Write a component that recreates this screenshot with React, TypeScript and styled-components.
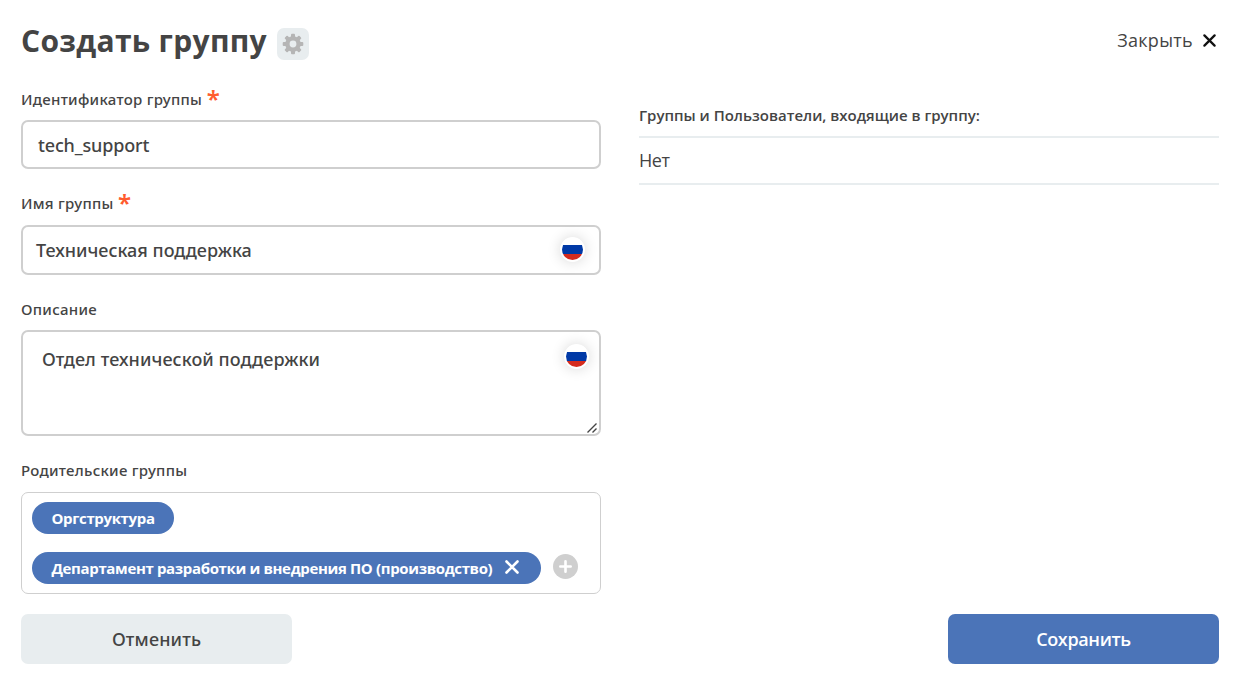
import React from "react";
import styled, { createGlobalStyle } from "styled-components";

const GlobalStyle = createGlobalStyle`
  *, *::before, *::after { box-sizing: border-box; }
  body { margin: 0; background: #fff; }
`;

const mediumFont = `"Noto Sans", "Open Sans", sans-serif`;

const Dialog = styled.main`
  width: 1236px;
  height: 682px;
  padding: 20px 17px 18px 21px;
  display: flex;
  flex-direction: column;
  background: #fff;
  color: #444;
  font-family: "Open Sans", "Noto Sans", sans-serif;
  font-size: 18px;
`;

const Header = styled.header`
  height: 44px;
  display: flex;
  align-items: center;
`;

const Title = styled.h1`
  margin: -2px 0 0;
  font-size: 30px;
  line-height: 44px;
  font-weight: 700;
  letter-spacing: 0.3px;
  white-space: nowrap;
`;

const SettingsButton = styled.button`
  width: 32px;
  height: 32px;
  margin: 4px 0 0 10px;
  padding: 0;
  display: grid;
  place-items: center;
  border: 0;
  border-radius: 7px;
  background: #e8edef;
`;

const CloseButton = styled.button`
  margin: 0 3px 4px auto;
  padding: 0;
  display: flex;
  align-items: center;
  gap: 10px;
  border: 0;
  background: none;
  color: #444;
  font: inherit;
  line-height: 42px;
  letter-spacing: 0.3px;

  svg {
    margin-top: 1px;
  }
`;

const Columns = styled.div`
  flex: 1;
  display: grid;
  grid-template-columns: 580px 580px;
  column-gap: 38px;
`;

const Form = styled.form`
  display: flex;
  flex-direction: column;
`;

const Label = styled.label<{ $top: number; $gap: number }>`
  margin-top: ${(p) => p.$top}px;
  margin-bottom: ${(p) => p.$gap}px;
  height: 22px;
  display: flex;
  font-family: ${mediumFont};
  font-size: 15px;
  line-height: 22px;
  font-weight: 500;
  letter-spacing: 0.28px;
  white-space: nowrap;
`;

const Required = styled.span`
  margin-left: 4.5px;
  color: #ff5b2e;
  font-size: 24px;
  line-height: 22px;
  font-weight: 600;
`;

const Field = styled.div<{ $height: number; $indent: number; $spacing?: number }>`
  height: ${(p) => p.$height}px;
  padding: 0 14px 0 ${(p) => p.$indent}px;
  display: flex;
  align-items: center;
  justify-content: space-between;
  border: 2px solid #cfcfcf;
  border-radius: 7px;
  font-family: ${mediumFont};
  font-weight: 500;
  line-height: 26px;
  letter-spacing: ${(p) => p.$spacing ?? 0}px;
`;

const TextArea = styled(Field)`
  position: relative;
  padding-top: 12px;
  padding-right: 10px;
  align-items: flex-start;
`;

const ResizeGrip = styled.svg`
  position: absolute;
  right: 2px;
  bottom: 1px;
`;

const AreaText = styled.span`
  padding-top: 2px;
`;

const FlagBadge = styled.span<{ $lift?: boolean }>`
  width: 25px;
  height: 25px;
  margin-bottom: ${(p) => (p.$lift ? 1 : 0)}px;
  flex: none;
  display: grid;
  place-items: center;
  border-radius: 50%;
  background: #fff;
  box-shadow: 0 0 14px rgba(0, 0, 0, 0.16);
`;

const Chips = styled.div`
  height: 102px;
  padding: 9px 10px;
  display: flex;
  flex-direction: column;
  gap: 18px;
  border: 1px solid #cfcfcf;
  border-radius: 7px;
`;

const ChipRow = styled.div`
  height: 32px;
  display: flex;
  align-items: flex-start;
  gap: 12px;
`;

const Chip = styled.span<{ $width: number }>`
  width: ${(p) => p.$width}px;
  height: 32px;
  padding: 0 22px 0 20px;
  display: flex;
  align-items: flex-start;
  justify-content: space-between;
  border-radius: 16px;
  background: #4b74b8;
  color: #fff;
  font-size: 15px;
  line-height: 32px;
  font-weight: 700;
  white-space: nowrap;

  svg {
    margin-top: 8px;
  }
`;

const ChipText = styled.span`
  margin-left: -0.5px;
  letter-spacing: -0.35px;
`;

const AddButton = styled.button`
  width: 25px;
  height: 25px;
  margin-top: 2px;
  padding: 0;
  border: 0;
  background: none;
`;

const Members = styled.section`
  padding-top: 40px;
`;

const MembersTitle = styled.h2`
  margin: 0;
  height: 34px;
  font-size: 15px;
  line-height: 22px;
  font-weight: 600;
  border-bottom: 2px solid #e8edef;
`;

const MembersRow = styled.div`
  height: 47px;
  line-height: 45px;
  letter-spacing: -0.4px;
  border-bottom: 2px solid #e8edef;
`;

const Footer = styled.footer`
  display: flex;
  justify-content: space-between;
`;

const Button = styled.button<{ $primary?: boolean }>`
  width: 271px;
  height: 50px;
  padding: 0;
  border: 0;
  border-radius: 7px;
  background: ${(p) => (p.$primary ? "#4b74b8" : "#e8edef")};
  color: ${(p) => (p.$primary ? "#fff" : "#444")};
  font-family: ${(p) => (p.$primary ? "inherit" : mediumFont)};
  font-size: 18px;
  font-weight: ${(p) => (p.$primary ? 600 : 500)};
  letter-spacing: ${(p) => (p.$primary ? -0.35 : 0.15)}px;
`;

const Flag = ({ lift }: { lift?: boolean }) => (
  <FlagBadge $lift={lift}>
    <svg width="21" height="21" viewBox="0 0 21 21">
      <clipPath id="flag-round">
        <circle cx="10.5" cy="10.5" r="10.5" />
      </clipPath>
      <g clipPath="url(#flag-round)">
        <path fill="#fff" d="M0 0h21v6H0z" />
        <path fill="#0039a6" d="M0 6h21v9H0z" />
        <path fill="#d52b1e" d="M0 15h21v6H0z" />
      </g>
    </svg>
  </FlagBadge>
);

const gearTeeth = [0, 45, 90, 135, 180, 225, 270, 315];

const Gear = () => (
  <svg width="22" height="22" viewBox="0 0 22 22" fill="#b5b5b5">
    {gearTeeth.map((angle) => (
      <rect key={angle} x="9" y="0.7" width="4" height="5" rx="1" transform={`rotate(${angle} 11 11)`} />
    ))}
    <circle cx="11" cy="11" r="5.6" fill="none" stroke="#b5b5b5" strokeWidth="4.4" />
  </svg>
);

const Cross = ({ size, color, stroke }: { size: number; color: string; stroke: number }) => (
  <svg width={size} height={size} viewBox="0 0 14 14" stroke={color} strokeWidth={stroke} strokeLinecap="round">
    <path d="M1.5 1.5l11 11M12.5 1.5l-11 11" />
  </svg>
);

const AddIcon = () => (
  <svg width="25" height="25" viewBox="0 0 25 25" display="block">
    <circle cx="12.5" cy="12.5" r="12.5" fill="#cfcfcf" />
    <path d="M12.5 7.3v10.4M7.3 12.5h10.4" stroke="#fff" strokeWidth="2.6" strokeLinecap="round" />
  </svg>
);

export default function App() {
  return (
    <Dialog>
      <GlobalStyle />
      <Header>
        <Title>Создать группу</Title>
        <SettingsButton aria-label="Настройки">
          <Gear />
        </SettingsButton>
        <CloseButton>
          Закрыть
          <Cross size={13} color="#111" stroke={2.4} />
        </CloseButton>
      </Header>
      <Columns>
        <Form>
          <Label $top={24} $gap={10}>
            Идентификатор группы<Required>*</Required>
          </Label>
          <Field $height={49} $indent={15} $spacing={-0.15}>tech_support</Field>
          <Label $top={23} $gap={11}>
            Имя группы<Required>*</Required>
          </Label>
          <Field $height={50} $indent={13}>
            Техническая поддержка
            <Flag lift />
          </Field>
          <Label $top={23} $gap={10}>Описание</Label>
          <TextArea $height={106} $indent={19} $spacing={0.07}>
            <AreaText>Отдел технической поддержки</AreaText>
            <Flag />
            <ResizeGrip width="10" height="10" viewBox="0 0 10 10" stroke="#444" strokeWidth="1.4">
              <path d="M0.5 9.5l9-9M5.5 9.5l4-4" />
            </ResizeGrip>
          </TextArea>
          <Label $top={23} $gap={11}>Родительские группы</Label>
          <Chips>
            <ChipRow>
              <Chip $width={142}>
                <ChipText>Оргструктура</ChipText>
              </Chip>
            </ChipRow>
            <ChipRow>
              <Chip $width={509}>
                <ChipText>Департамент разработки и внедрения ПО (производство)</ChipText>
                <Cross size={14} color="#fff" stroke={2.6} />
              </Chip>
              <AddButton type="button" aria-label="Добавить">
                <AddIcon />
              </AddButton>
            </ChipRow>
          </Chips>
        </Form>
        <Members>
          <MembersTitle>Группы и Пользователи, входящие в группу:</MembersTitle>
          <MembersRow>Нет</MembersRow>
        </Members>
      </Columns>
      <Footer>
        <Button>Отменить</Button>
        <Button $primary>Сохранить</Button>
      </Footer>
    </Dialog>
  );
}
